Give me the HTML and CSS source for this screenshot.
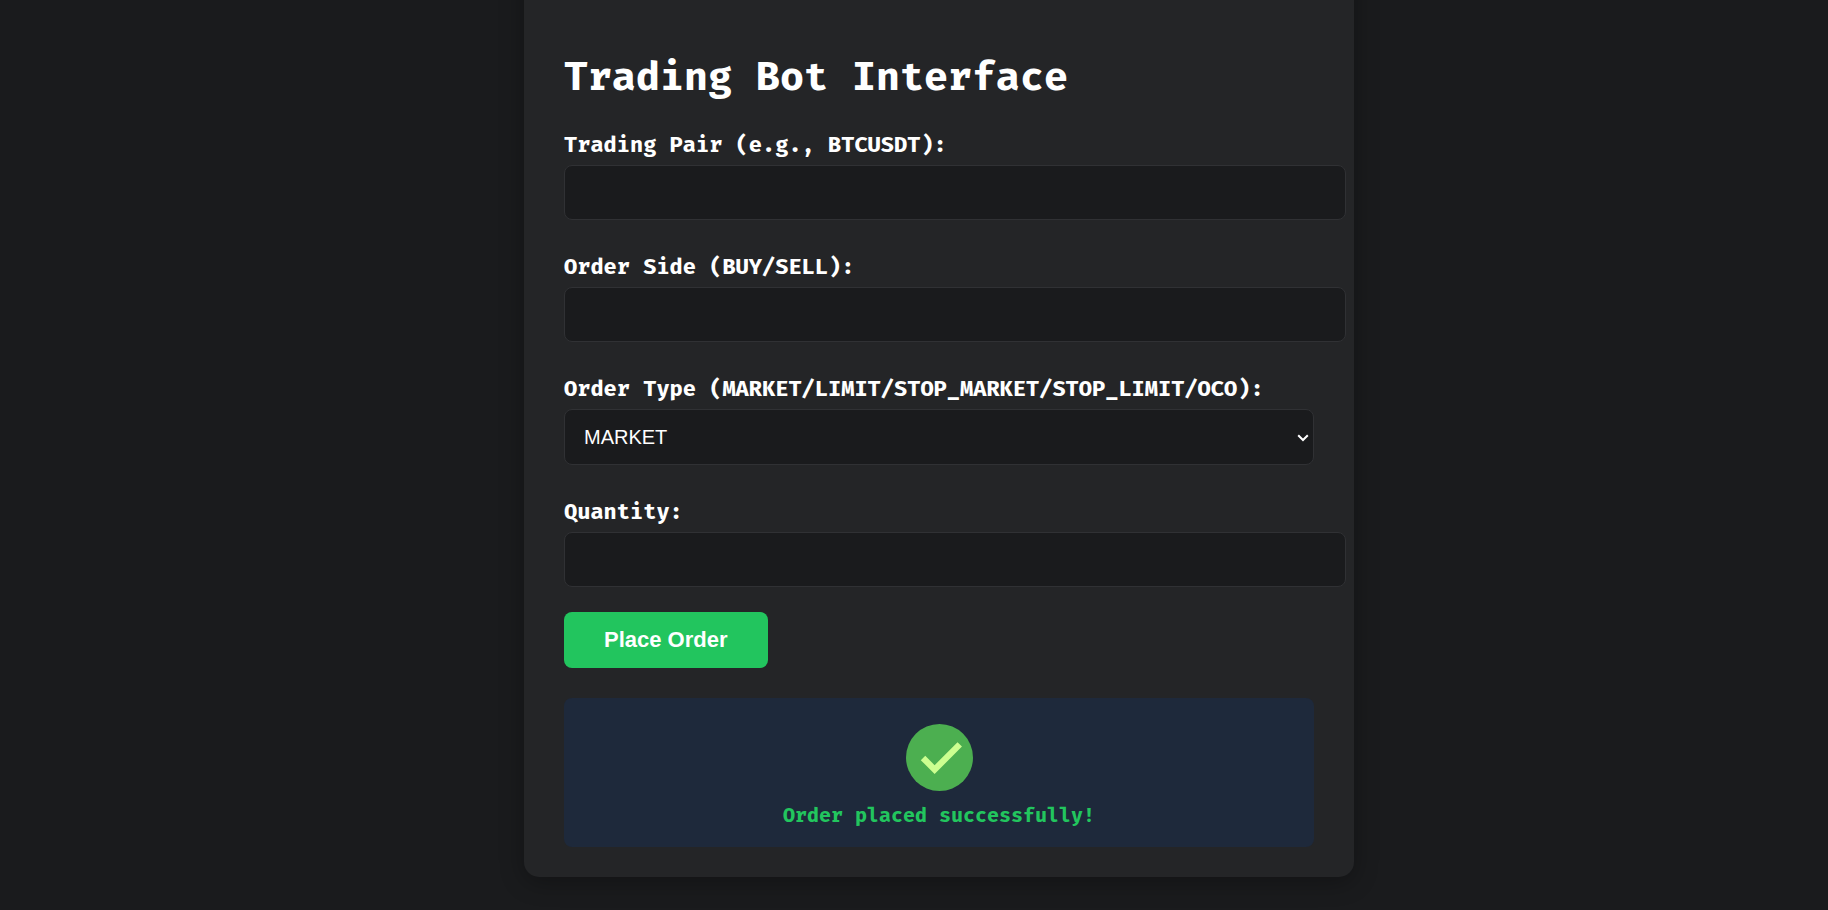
FILE: index.html
```html
<!DOCTYPE html>
<html lang="en">
<head>
<meta charset="utf-8">
<meta name="viewport" content="width=device-width, initial-scale=1">
<title>Trading Bot Interface</title>
<link rel="stylesheet" href="styles.css">
</head>
<body>
<main class="card">
  <h1 class="title">Trading Bot Interface</h1>
  <form class="order-form">
    <div class="field">
      <label class="label" for="symbol">Trading Pair (e.g., BTCUSDT):</label>
      <input class="control" id="symbol" type="text">
    </div>
    <div class="field">
      <label class="label" for="side">Order Side (BUY/SELL):</label>
      <input class="control" id="side" type="text">
    </div>
    <div class="field">
      <label class="label" for="type">Order Type (MARKET/LIMIT/STOP_MARKET/STOP_LIMIT/OCO):</label>
      <select class="control control-select" id="type">
        <option>MARKET</option>
        <option>LIMIT</option>
        <option>STOP_MARKET</option>
        <option>STOP_LIMIT</option>
        <option>OCO</option>
      </select>
    </div>
    <div class="field">
      <label class="label" for="quantity">Quantity:</label>
      <input class="control" id="quantity" type="text">
    </div>
    <button class="submit" type="button">Place Order</button>
  </form>
  <div class="status" role="status">
    <svg class="status-icon" viewBox="0 0 48 48" aria-hidden="true">
      <circle cx="24" cy="24" r="24" fill="#4caf50"/>
      <path fill="#ccff90" d="M36.9 13.1 20.5 29.5l-6.7-6.7-3.2 3.1 9.9 9.9L40.1 16.2z"/>
    </svg>
    <p class="status-text">Order placed successfully!</p>
  </div>
</main>
</body>
</html>
```
FILE: styles.css
```css
body {
  margin: 0;
  padding-left: 50px;
  background: #1a1b1d;
  color: #fff;
  font-family: "Fira Mono", "Fira Code", "DejaVu Sans Mono", monospace;
}

.card {
  box-sizing: border-box;
  max-width: 830px;
  margin: -40px auto 32px;
  padding: 92px 40px 30px;
  border-radius: 15px;
  background: #242527;
  box-shadow: 0 5px 25px rgba(0, 0, 0, 0.3);
}

.title {
  margin: 0 0 26px;
  font-size: 40px;
  line-height: 50px;
}

.field {
  margin-bottom: 30px;
}

.field:last-of-type {
  margin-bottom: 25px;
}

.label {
  display: block;
  margin-bottom: 3px;
  font-size: 22px;
  font-weight: 700;
  line-height: 34px;
}

.control {
  display: block;
  width: 100%;
  padding: 15px;
  border: 1px solid #303134;
  border-radius: 8px;
  background-color: #1a1b1d;
  color: #fff;
  font-family: "Liberation Sans", Arial, sans-serif;
  font-size: 20px;
}

.control-select {
  box-sizing: border-box;
  height: 56px;
  padding-left: 19px;
  appearance: none;
  background-image: url("data:image/svg+xml,%3Csvg xmlns='http://www.w3.org/2000/svg' width='12' height='8' viewBox='0 0 12 8'%3E%3Cpath d='M1.2 1.2 6 6l4.800-4.800' fill='none' stroke='white' stroke-width='2'/%3E%3C/svg%3E");
  background-position: right 4px top 24px;
  background-repeat: no-repeat;
}

.submit {
  display: block;
  height: 56px;
  padding: 0 40px;
  border: 0;
  border-radius: 8px;
  background: #22c55e;
  color: #fff;
  font-family: "Liberation Sans", Arial, sans-serif;
  font-size: 22px;
  font-weight: 700;
}

.status {
  margin-top: 30px;
  padding: 26px 20px 16px;
  border-radius: 8px;
  background: #1e293b;
  text-align: center;
}

.status-icon {
  display: block;
  width: 67px;
  height: 67px;
  margin: 0 auto 8px;
}

.status-text {
  margin: 0;
  color: #22c55e;
  font-size: 20px;
  font-weight: 700;
  line-height: 32px;
}
```
